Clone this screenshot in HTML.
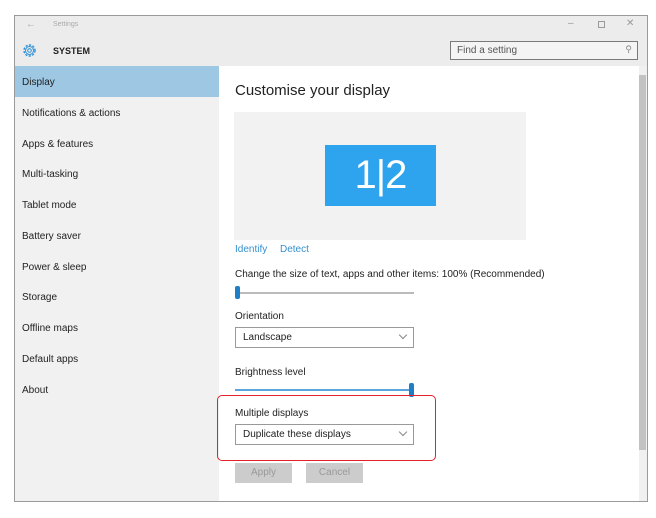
<!DOCTYPE html>
<html><head><style>
*{margin:0;padding:0;box-sizing:border-box}
body{width:656px;height:518px;background:#fff;font-family:"Liberation Sans",sans-serif;position:relative;overflow:hidden;color:#222}
.a{position:absolute}
.win{left:14px;top:15px;width:634px;height:487px;border:1px solid #9a9a9a;background:#fff}
.t{font-size:10px;color:#222}
.nav{font-size:10px;color:#222;left:22px}
.dd{border:1px solid #999;background:#fff;font-size:10px;padding:4px 0 0 7px;height:21px}
.chev{position:absolute;right:7px;top:4px;width:6px;height:6px;border-right:1px solid #888;border-bottom:1px solid #888;transform:rotate(45deg)}
</style></head><body>
<div class="a win"></div>
<div class="a" style="left:15px;top:16px;width:632px;height:50px;background:#ececec"></div>
<div class="a" style="left:15px;top:66px;width:204px;height:435px;background:#f1f1f1"></div>
<div class="a" style="left:15px;top:66px;width:204px;height:31px;background:#9dc7e3"></div>
<div class="a" style="left:26px;top:19px;font-size:10px;color:#aaa">←</div>
<div class="a" style="left:53px;top:21px;font-size:7px;color:#aaa">Settings</div>
<div class="a" style="left:568px;top:18px;font-size:10px;color:#999">–</div>
<div class="a" style="left:598px;top:21px;width:7px;height:7px;border:1px solid #999"></div>
<div class="a" style="left:626px;top:18px;font-size:10px;color:#999">✕</div>
<svg class="a" style="left:21px;top:42px" width="17" height="17" viewBox="0 0 17 17"><circle cx="8.5" cy="8.5" r="5.5" fill="none" stroke="#2b8fd6" stroke-width="1.4" stroke-dasharray="2.2 1.4"/><circle cx="8.5" cy="8.5" r="4" fill="none" stroke="#2b8fd6" stroke-width="1"/><circle cx="8.5" cy="8.5" r="1.8" fill="none" stroke="#2b8fd6" stroke-width="1"/></svg>
<div class="a" style="left:53px;top:46px;font-size:9px;font-weight:bold">SYSTEM</div>
<div class="a" style="left:450px;top:41px;width:188px;height:19px;border:1px solid #7a7a7a;background:#f4f4f4;font-size:10px;color:#555;padding:3px 0 0 6px">Find a setting<span style="position:absolute;right:5px;top:2px;color:#888;font-size:9px">⚲</span></div>
<div class="a nav" style="top:77px">Display</div>
<div class="a nav" style="top:108px">Notifications &amp; actions</div>
<div class="a nav" style="top:139px">Apps &amp; features</div>
<div class="a nav" style="top:169px">Multi-tasking</div>
<div class="a nav" style="top:200px">Tablet mode</div>
<div class="a nav" style="top:231px">Battery saver</div>
<div class="a nav" style="top:262px">Power &amp; sleep</div>
<div class="a nav" style="top:292px">Storage</div>
<div class="a nav" style="top:323px">Offline maps</div>
<div class="a nav" style="top:354px">Default apps</div>
<div class="a nav" style="top:385px">About</div>
<div class="a" style="left:639px;top:66px;width:8px;height:435px;background:#f0f0f0"></div>
<div class="a" style="left:639px;top:75px;width:7px;height:375px;background:#c2c2c2"></div>
<div class="a" style="left:235px;top:82px;font-size:15px;color:#222">Customise your display</div>
<div class="a" style="left:234px;top:112px;width:292px;height:128px;background:#f2f2f2"></div>
<div class="a" style="left:325px;top:145px;width:111px;height:61px;background:#2ea3ee;color:#fff;font-size:40px;font-weight:300;text-align:center;line-height:61px;letter-spacing:-1px">1|2</div>
<div class="a" style="left:235px;top:244px;font-size:10px;color:#3490cf">Identify</div>
<div class="a" style="left:280px;top:244px;font-size:10px;color:#3490cf">Detect</div>
<div class="a t" style="left:235px;top:269px">Change the size of text, apps and other items: 100% (Recommended)</div>
<div class="a" style="left:235px;top:292px;width:179px;height:2px;background:#bbb"></div>
<div class="a" style="left:235px;top:286px;width:5px;height:13px;background:#1e7fc7;border-radius:2px"></div>
<div class="a t" style="left:235px;top:311px">Orientation</div>
<div class="a dd" style="left:235px;top:327px;width:179px">Landscape<div class="chev"></div></div>
<div class="a t" style="left:235px;top:367px">Brightness level</div>
<div class="a" style="left:235px;top:389px;width:177px;height:2px;background:#5aa6dc"></div>
<div class="a" style="left:409px;top:383px;width:5px;height:14px;background:#1e7fc7;border-radius:2px"></div>
<div class="a" style="left:217px;top:395px;width:219px;height:66px;border:1.5px solid #e0232a;border-radius:5px"></div>
<div class="a t" style="left:235px;top:408px">Multiple displays</div>
<div class="a dd" style="left:235px;top:424px;width:179px">Duplicate these displays<div class="chev"></div></div>
<div class="a" style="left:235px;top:463px;width:57px;height:20px;background:#ccc;font-size:10px;color:#999;text-align:center;line-height:20px">Apply</div>
<div class="a" style="left:306px;top:463px;width:57px;height:20px;background:#ccc;font-size:10px;color:#999;text-align:center;line-height:20px">Cancel</div>
</body></html>
